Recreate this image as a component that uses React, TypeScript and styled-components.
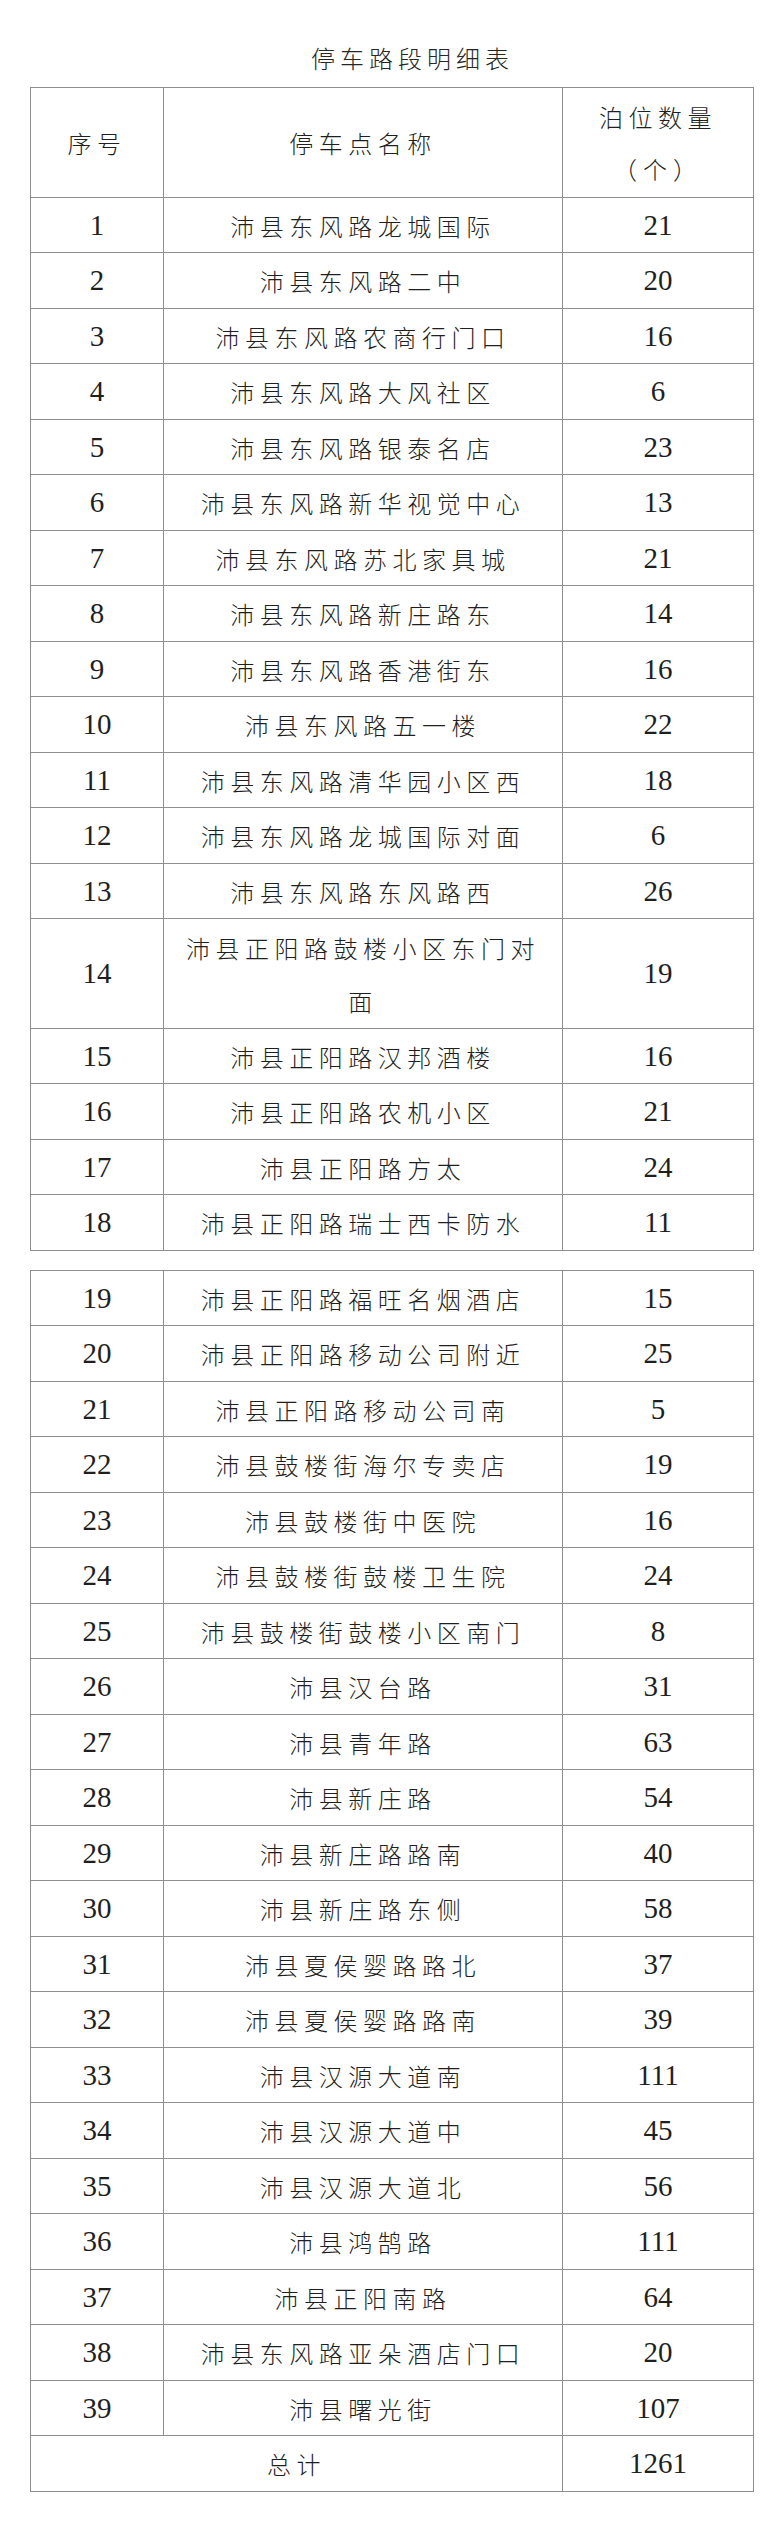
import React from 'react'
import styled, { createGlobalStyle } from 'styled-components';

const GlobalStyle = createGlobalStyle`
  html, body {
    margin: 0;
    padding: 0;
    background: #ffffff;
  }
  body {
    font-family: "Liberation Serif", "Noto Sans CJK SC", serif;
    color: #1f1f1f;
  }
`;

const cjk = `"Noto Sans CJK SC", "Noto Sans CJK TC", sans-serif`;
const num = `"Liberation Serif", "Times New Roman", serif`;
const line = '#8e8e8e';
const dark = '#222222';

const Page = styled.div`
  width: 781px;
  min-height: 2532px;
  padding: 44px 0 0 0;
  box-sizing: border-box;
`;

const Title = styled.h1`
  margin: 0 0 15px 0;
  height: 28px;
  line-height: 28px;
  text-align: center;
  font-family: ${cjk};
  font-weight: 300;
  font-size: 24px;
  letter-spacing: 5px;
  padding-left: 44px;
  color: #262626;
`;

const Table = styled.table<{ $first?: boolean }>`
  width: 723px;
  margin: ${({ $first }) => ($first ? '0 0 0 30px' : '19px 0 0 30px')};
  border-collapse: collapse;
  table-layout: fixed;
  border-top: 1px solid ${({ $first }) => ($first ? dark : line)};
  border-bottom: 1px solid ${({ $first }) => ($first ? dark : line)};
`;

const Cell = styled.td<{ $h?: number; $kind?: 'num' | 'text' }>`
  border: 1px solid ${line};
  height: ${({ $h }) => ($h ?? 56) - 1}px;
  padding: 0 14px;
  text-align: center;
  vertical-align: middle;
  box-sizing: content-box;
  font-family: ${({ $kind }) => ($kind === 'num' ? num : cjk)};
  font-size: ${({ $kind }) => ($kind === 'num' ? '29px' : '24px')};
  font-weight: ${({ $kind }) => ($kind === 'num' ? 400 : 300)};
  letter-spacing: ${({ $kind }) => ($kind === 'num' ? '0' : '5.5px')};
  line-height: 53px;
  color: #1f1f1f;
`;

const HeadCell = styled(Cell)`
  line-height: 52px;
`;

const Paren = styled.span`
  letter-spacing: 6px;
`;

type Row = [number, string, number];

const rows: Row[] = [
  [1, '沛县东风路龙城国际', 21],
  [2, '沛县东风路二中', 20],
  [3, '沛县东风路农商行门口', 16],
  [4, '沛县东风路大风社区', 6],
  [5, '沛县东风路银泰名店', 23],
  [6, '沛县东风路新华视觉中心', 13],
  [7, '沛县东风路苏北家具城', 21],
  [8, '沛县东风路新庄路东', 14],
  [9, '沛县东风路香港街东', 16],
  [10, '沛县东风路五一楼', 22],
  [11, '沛县东风路清华园小区西', 18],
  [12, '沛县东风路龙城国际对面', 6],
  [13, '沛县东风路东风路西', 26],
  [14, '沛县正阳路鼓楼小区东门对面', 19],
  [15, '沛县正阳路汉邦酒楼', 16],
  [16, '沛县正阳路农机小区', 21],
  [17, '沛县正阳路方太', 24],
  [18, '沛县正阳路瑞士西卡防水', 11],
  [19, '沛县正阳路福旺名烟酒店', 15],
  [20, '沛县正阳路移动公司附近', 25],
  [21, '沛县正阳路移动公司南', 5],
  [22, '沛县鼓楼街海尔专卖店', 19],
  [23, '沛县鼓楼街中医院', 16],
  [24, '沛县鼓楼街鼓楼卫生院', 24],
  [25, '沛县鼓楼街鼓楼小区南门', 8],
  [26, '沛县汉台路', 31],
  [27, '沛县青年路', 63],
  [28, '沛县新庄路', 54],
  [29, '沛县新庄路路南', 40],
  [30, '沛县新庄路东侧', 58],
  [31, '沛县夏侯婴路路北', 37],
  [32, '沛县夏侯婴路路南', 39],
  [33, '沛县汉源大道南', 111],
  [34, '沛县汉源大道中', 45],
  [35, '沛县汉源大道北', 56],
  [36, '沛县鸿鹄路', 111],
  [37, '沛县正阳南路', 64],
  [38, '沛县东风路亚朵酒店门口', 20],
  [39, '沛县曙光街', 107],
];

const total = rows.reduce((s, r) => s + r[2], 0);

// rows in the scan are ~55.5px, so alternate 55 / 56
const rowHeight = (no: number, name: string) =>
  name.length > 11 ? 110 : no % 2 ? 55 : 56;

const Cols = () => (
  <colgroup>
    <col style={{ width: 133 }} />
    <col style={{ width: 399 }} />
    <col style={{ width: 191 }} />
  </colgroup>
);

const DataRow = ({ row }: { row: Row }) => {
  const h = rowHeight(row[0], row[1]);
  return (
    <tr>
      <Cell $kind="num" $h={h}>{row[0]}</Cell>
      <Cell $kind="text" $h={h}>{row[1]}</Cell>
      <Cell $kind="num" $h={h}>{row[2]}</Cell>
    </tr>
  );
};

export default function App() {
  const first = rows.slice(0, 18);
  const second = rows.slice(18);
  return (
    <Page>
      <GlobalStyle />
      <Title>停车路段明细表</Title>
      <Table $first>
        <Cols />
        <tbody>
          <tr>
            <HeadCell $kind="text" $h={110}>序号</HeadCell>
            <HeadCell $kind="text" $h={110}>停车点名称</HeadCell>
            <HeadCell $kind="text" $h={110}>
              泊位数量
              <br />
              <Paren>（个）</Paren>
            </HeadCell>
          </tr>
          {first.map((r) => (
            <DataRow key={r[0]} row={r} />
          ))}
        </tbody>
      </Table>
      <Table>
        <Cols />
        <tbody>
          {second.map((r) => (
            <DataRow key={r[0]} row={r} />
          ))}
          <tr>
            <Cell $kind="text" $h={56} colSpan={2}>总计</Cell>
            <Cell $kind="num" $h={56}>{total}</Cell>
          </tr>
        </tbody>
      </Table>
    </Page>
  );
}
